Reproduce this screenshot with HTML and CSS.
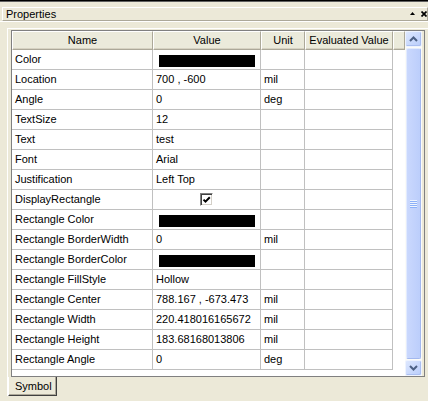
FILE: index.html
```html
<!DOCTYPE html>
<html>
<head>
<meta charset="utf-8">
<title>Properties</title>
<link rel="stylesheet" href="styles.css">
</head>
<body>
<div class="topline"></div>
<div class="titlebar">
  <span class="title">Properties</span>
  <span class="tb-icons">
    <svg class="ico-pin" width="5" height="3" viewBox="0 0 5 3"><polygon points="0,3 2.5,0 5,3" fill="#000"/></svg>
    <svg class="ico-x" width="6" height="6" viewBox="0 0 6 6"><path d="M0.5 0.5 L5.5 5.5 M5.5 0.5 L0.5 5.5" stroke="#000" stroke-width="1.7" fill="none"/></svg>
  </span>
</div>
<div class="sep"></div>
<div class="frame">
  <div class="grid">
    <div class="list">
      <div class="header">
        <div class="hcell">Name</div>
        <div class="hcell">Value</div>
        <div class="hcell">Unit</div>
        <div class="hcell">Evaluated Value</div>
        <div class="hcell filler"></div>
      </div>
      <div class="row"><div class="cell">Color</div><div class="cell"><span class="swatch"></span></div><div class="cell"></div><div class="cell"></div></div>
      <div class="row"><div class="cell">Location</div><div class="cell">700 , -600</div><div class="cell">mil</div><div class="cell"></div></div>
      <div class="row"><div class="cell">Angle</div><div class="cell">0</div><div class="cell">deg</div><div class="cell"></div></div>
      <div class="row"><div class="cell">TextSize</div><div class="cell">12</div><div class="cell"></div><div class="cell"></div></div>
      <div class="row"><div class="cell">Text</div><div class="cell">test</div><div class="cell"></div><div class="cell"></div></div>
      <div class="row"><div class="cell">Font</div><div class="cell">Arial</div><div class="cell"></div><div class="cell"></div></div>
      <div class="row"><div class="cell">Justification</div><div class="cell">Left Top</div><div class="cell"></div><div class="cell"></div></div>
      <div class="row"><div class="cell">DisplayRectangle</div><div class="cell checkcell"><span class="checkbox"><svg width="11" height="11" viewBox="0 0 11 11"><polyline points="2.5,5.6 4.5,7.6 8.8,3.3" stroke="#000" stroke-width="2" fill="none"/></svg></span></div><div class="cell"></div><div class="cell"></div></div>
      <div class="row"><div class="cell">Rectangle Color</div><div class="cell"><span class="swatch"></span></div><div class="cell"></div><div class="cell"></div></div>
      <div class="row"><div class="cell">Rectangle BorderWidth</div><div class="cell">0</div><div class="cell">mil</div><div class="cell"></div></div>
      <div class="row"><div class="cell">Rectangle BorderColor</div><div class="cell"><span class="swatch"></span></div><div class="cell"></div><div class="cell"></div></div>
      <div class="row"><div class="cell">Rectangle FillStyle</div><div class="cell">Hollow</div><div class="cell"></div><div class="cell"></div></div>
      <div class="row"><div class="cell">Rectangle Center</div><div class="cell">788.167 , -673.473</div><div class="cell">mil</div><div class="cell"></div></div>
      <div class="row"><div class="cell">Rectangle Width</div><div class="cell">220.418016165672</div><div class="cell">mil</div><div class="cell"></div></div>
      <div class="row"><div class="cell">Rectangle Height</div><div class="cell">183.68168013806</div><div class="cell">mil</div><div class="cell"></div></div>
      <div class="row"><div class="cell">Rectangle Angle</div><div class="cell">0</div><div class="cell">deg</div><div class="cell"></div></div>
    </div>
    <div class="vscroll">
      <div class="sb-btn"><svg width="9" height="6" viewBox="0 0 9 6"><polyline points="1,5 4.5,1.5 8,5" stroke="#4d6185" stroke-width="2" fill="none"/></svg></div>
      <div class="thumb"><span class="grip"></span></div>
      <div class="sb-btn"><svg width="9" height="6" viewBox="0 0 9 6"><polyline points="1,1 4.5,4.5 8,1" stroke="#4d6185" stroke-width="2" fill="none"/></svg></div>
    </div>
  </div>
  <div class="tabs"><div class="tab">Symbol</div></div>
</div>
</body>
</html>
```
FILE: styles.css
```css
html, body {
  margin: 0;
  padding: 0;
}
body {
  width: 428px;
  height: 401px;
  overflow: hidden;
  background: #ece9d8;
  font-family: "Liberation Sans", Arial, sans-serif;
  font-size: 11px;
  color: #000;
}
.topline {
  height: 1px;
  background: #000;
  border-bottom: 1px solid #5f5f5f;
}
.titlebar {
  margin: 5px 0 0 2px;
  height: 12px;
  border: 1px solid;
  border-color: #fff #aca899 #aca899 #fff;
  display: flex;
  align-items: center;
  justify-content: space-between;
  padding-left: 3px;
  line-height: 12px;
}
.tb-icons {
  display: flex;
  align-items: center;
  gap: 6px;
  padding-right: 0;
}
.ico-pin { display: block; margin-top: -1px; }
.ico-x { display: block; }
.sep {
  height: 1px;
  background: #fff;
}
.frame {
  margin: 6px 0 0 7px;
  border-left: 1px solid #fff;
  border-top: 1px solid #fff;
  padding: 1px 0 0 3px;
}
.grid {
  display: flex;
  width: 412px;
  height: 345px;
  border: 1px solid #808080;
  background: #ece9d8;
}
.list {
  width: 393px;
  background: #fff;
}
.header {
  display: grid;
  grid-template-columns: 141px 108px 44px 88px 12px;
  height: 19px;
}
.hcell {
  box-sizing: border-box;
  height: 19px;
  background: #ebeadb;
  border-top: 1px solid #fff;
  border-left: 1px solid #fff;
  border-right: 1px solid #aca899;
  border-bottom: 1px solid #aca899;
  box-shadow: inset 0 -1px 0 #d6d2c2;
  text-align: center;
  line-height: 17px;
  white-space: nowrap;
  overflow: hidden;
}
.row {
  display: grid;
  grid-template-columns: 141px 108px 44px 88px;
  height: 20px;
}
.cell {
  box-sizing: border-box;
  height: 20px;
  border-right: 1px solid #c0c0c0;
  border-bottom: 1px solid #c0c0c0;
  padding-left: 3px;
  line-height: 19px;
  white-space: nowrap;
  overflow: hidden;
}
.swatch {
  display: block;
  width: 96px;
  height: 12px;
  background: #000;
  margin: 5px 0 0 3px;
}
.checkcell {
  display: flex;
  justify-content: center;
  padding-left: 0;
}
.checkbox {
  display: block;
  width: 13px;
  height: 13px;
  margin-top: 3px;
  box-sizing: border-box;
  border: 1px solid;
  border-color: #808080 #fff #fff #808080;
  background: #fff;
  box-shadow: inset 1px 1px 0 #404040, inset -1px -1px 0 #d4d0c8;
}
.checkbox svg { display: block; }
.vscroll {
  width: 17px;
  display: flex;
  flex-direction: column;
  gap: 1px;
  background: #fbfbf8;
}
.sb-btn {
  height: 16px;
  box-sizing: border-box;
  border: 1px solid #eef3fe;
  border-radius: 2px;
  background: linear-gradient(135deg, #dde7fe, #b9cdfb);
  box-shadow: inset -1px -1px 0 #abbff1;
  display: flex;
  align-items: center;
  justify-content: center;
}
.sb-btn svg { display: block; }
.thumb {
  flex: 1;
  margin: 0 1px;
  box-sizing: border-box;
  border: 1px solid;
  border-color: #e3ebfe #a3b8ef #a3b8ef #e3ebfe;
  border-radius: 2px;
  background: linear-gradient(90deg, #cad8fd, #bccefb);
  display: flex;
  align-items: center;
  justify-content: center;
}
.grip {
  display: block;
  width: 7px;
  height: 8px;
  background: repeating-linear-gradient(to bottom, #eef4fe 0 1px, #8cb0f8 1px 2px);
}
.tabs {
  display: flex;
  margin-left: -3px;
}
.tab {
  box-sizing: border-box;
  width: 49px;
  height: 19px;
  border-left: 1px solid #fff;
  border-right: 1px solid #404040;
  border-bottom: 1px solid #404040;
  box-shadow: inset -1px -1px 0 #aca899;
  padding-left: 6px;
  line-height: 18px;
}
```
